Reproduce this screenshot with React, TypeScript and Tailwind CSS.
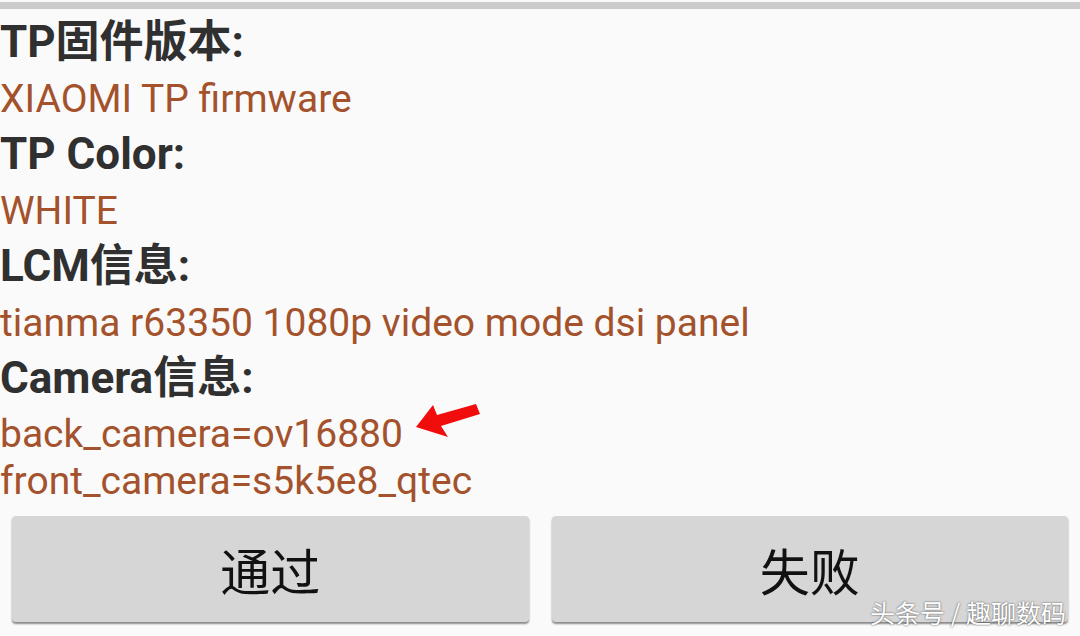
const heading = 'font-bold text-[44px] h-[54px] leading-[54px] text-[#303030] whitespace-nowrap';
const value = 'pt-[2px] text-[39px] leading-[56px] text-[#a3522c] whitespace-nowrap';

const rows = [
  { label: 'TP固件版本:', text: 'XIAOMI TP firmware' },
  { label: 'TP Color:', text: 'WHITE' },
  { label: 'LCM信息:', text: 'tianma r63350 1080p video mode dsi panel' },
];

const Arrow = () => (
  <svg className="absolute left-[412px] top-[399px]" width="72" height="44" viewBox="0 0 72 44">
    <polygon points="4,28 21,6 25,16 64,5 68,15 29,27 36,38" fill="#f20d0d" />
  </svg>
);

export default function App() {
  return (
    <div
      className="relative w-[1080px] h-[636px] overflow-hidden bg-[#fafafa] flex flex-col"
      style={{ fontFamily: 'Roboto, "Noto Sans CJK SC", sans-serif' }}
    >
      <div className="mt-[2px] h-[7px] bg-[#cbcbcb]" />

      <div className="pt-[6px]">
        {rows.map((r) => (
          <div key={r.label}>
            <div className={heading}>{r.label}</div>
            <div className={value}>{r.text}</div>
          </div>
        ))}
        <div className={heading}>Camera信息:</div>
        <div className="pt-[6px] text-[39px] leading-[47px] text-[#a3522c] whitespace-nowrap">
          <div>back_camera=ov16880</div>
          <div>front_camera=s5k5e8_qtec</div>
        </div>
      </div>

      <div className="mt-[11px] flex gap-[23px] px-[12px]">
        {['通过', '失败'].map((t) => (
          <button
            key={t}
            className="flex-1 h-[106px] rounded-[4px] bg-[#d6d6d6] shadow-[0_2px_2px_rgba(0,0,0,0.45)] text-[50px] text-[#111] flex items-center justify-center"
            style={{ fontFamily: '"Noto Sans CJK SC", sans-serif' }}
          >
            {t}
          </button>
        ))}
      </div>

      <Arrow />

      <div
        className="absolute right-[14px] top-[596px] text-[25px] leading-[32px] text-white [text-shadow:0_0_2px_rgba(0,0,0,0.7)] whitespace-nowrap"
        style={{ fontFamily: '"Noto Sans CJK SC", sans-serif' }}
      >
        头条号 / 趣聊数码
      </div>
    </div>
  );
}
